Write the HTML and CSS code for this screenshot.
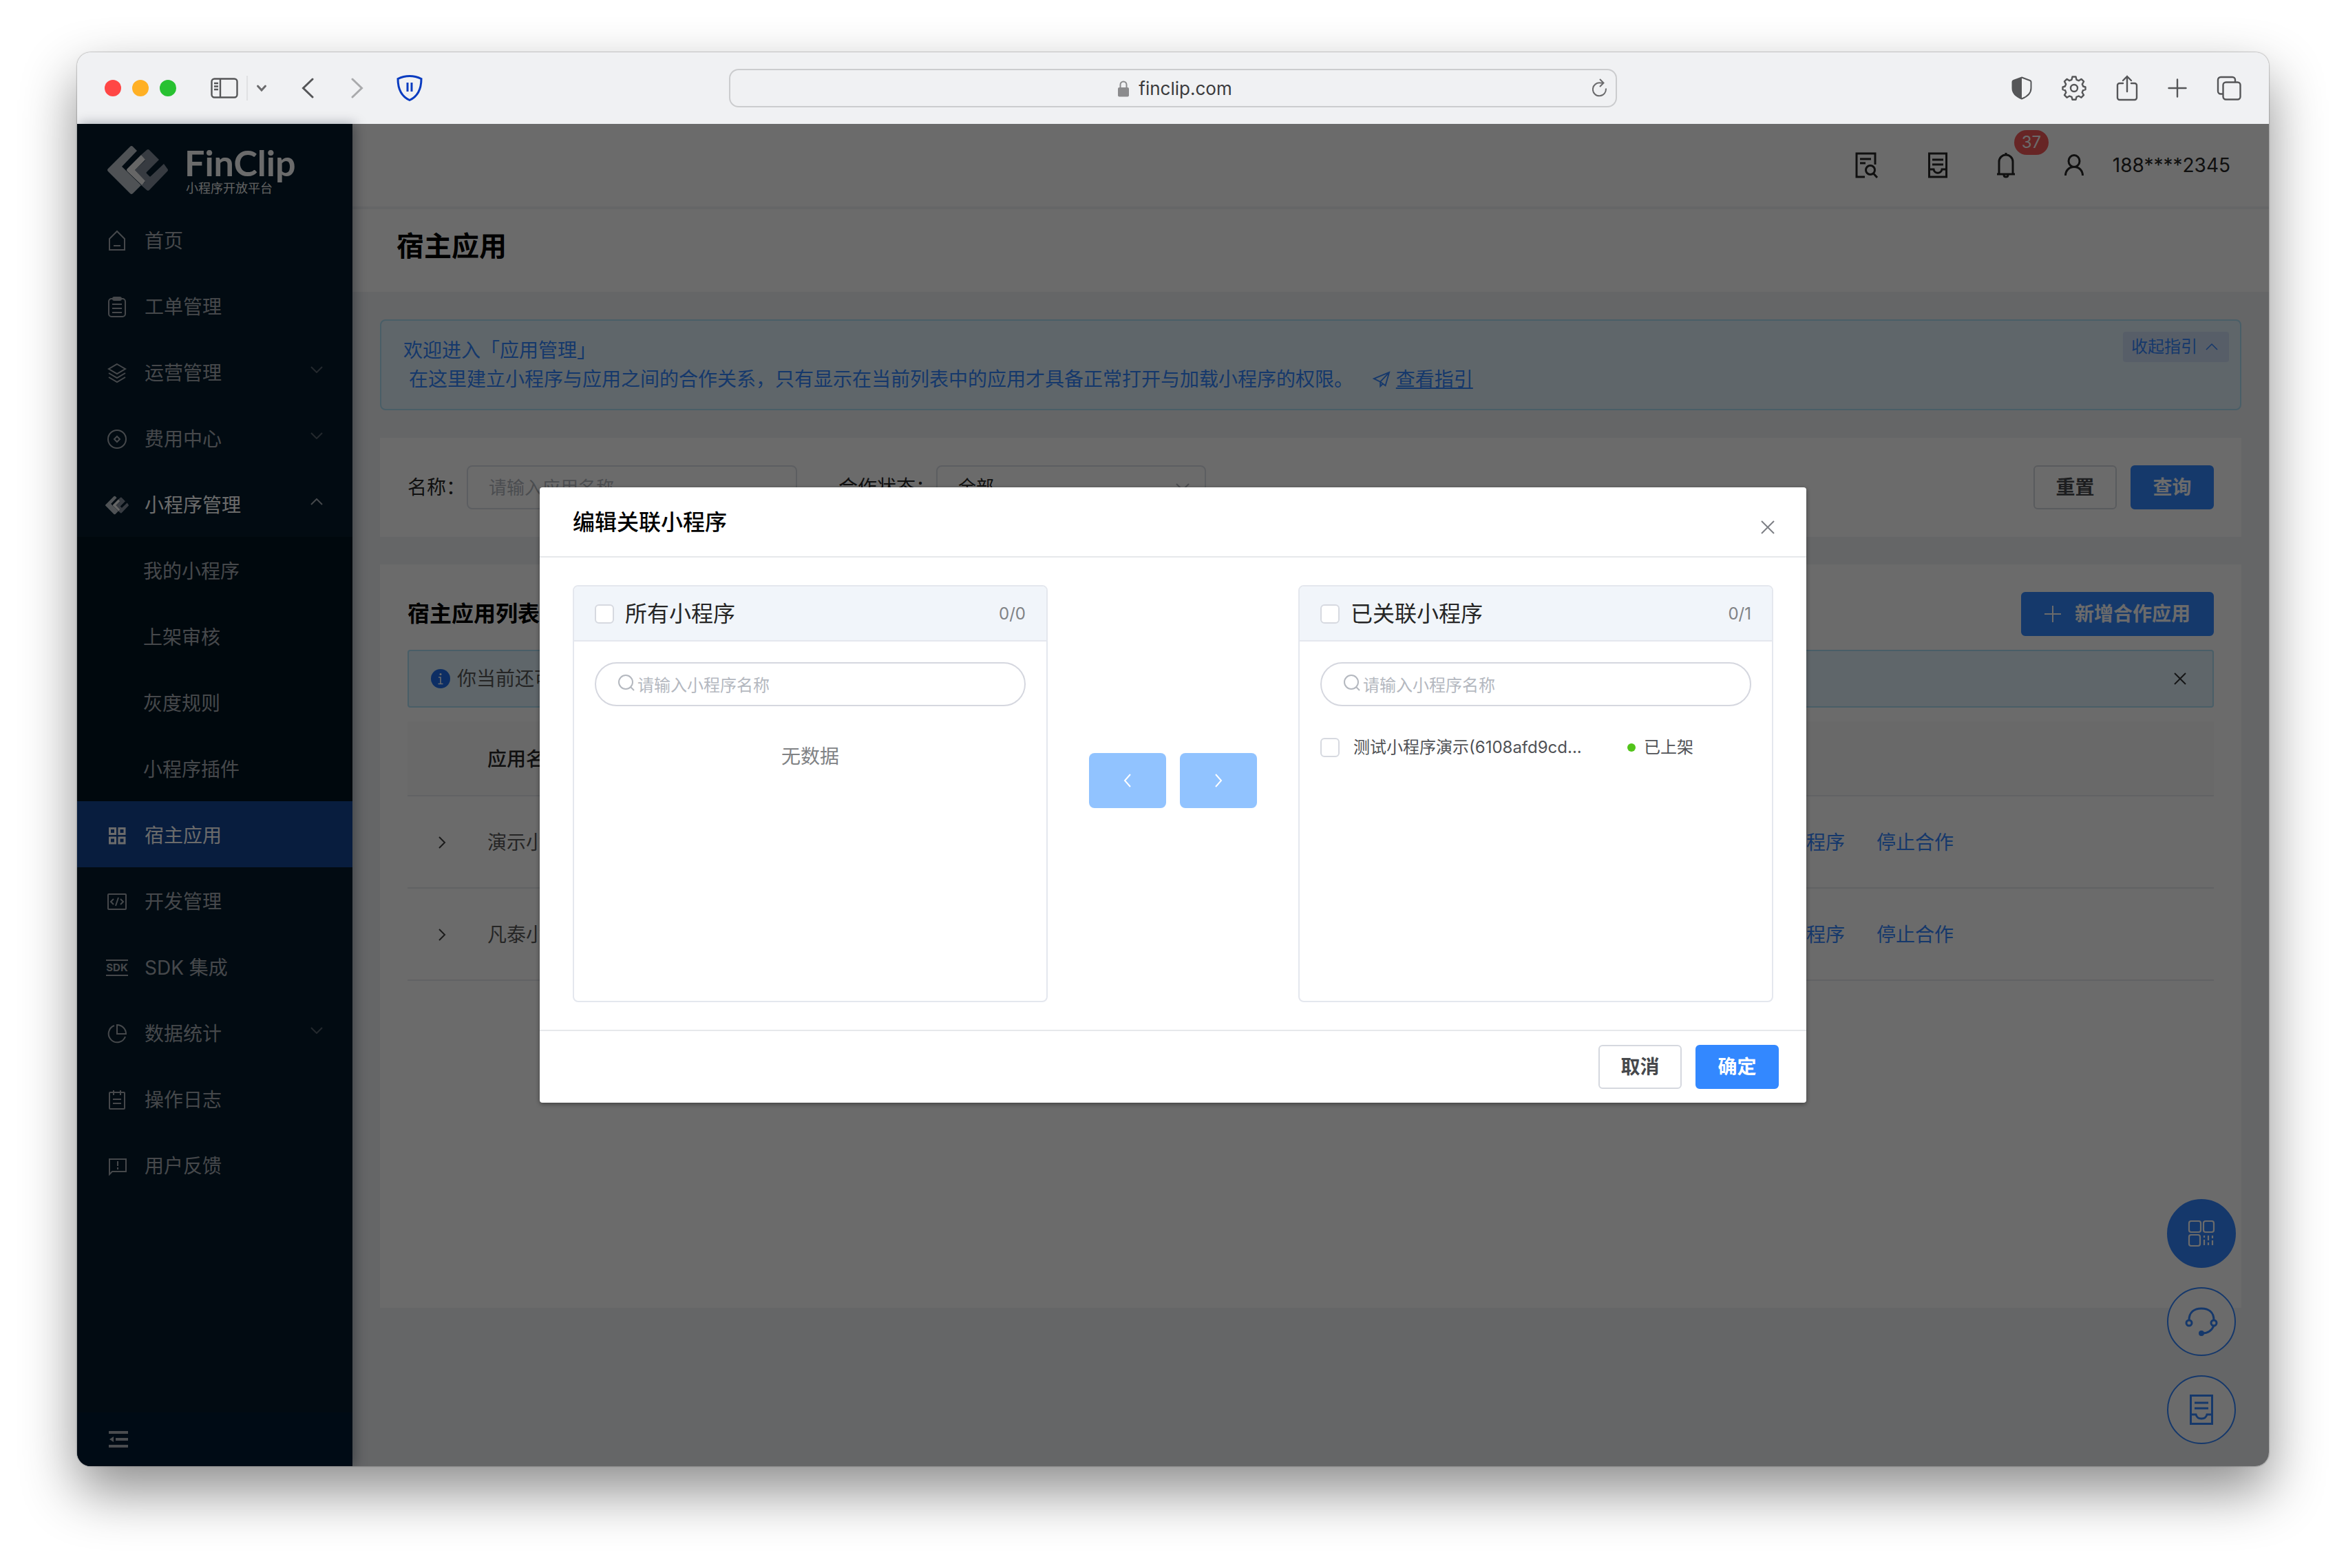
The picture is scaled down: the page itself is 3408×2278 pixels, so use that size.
FILE: index.html
```html
<!DOCTYPE html>
<html lang="zh-CN">
<head>
    <meta charset="UTF-8">
    <title>FinClip 小程序开放平台</title>
    <link rel="stylesheet" href="styles.css">
</head>
<body>
    <div class="window">
        <div class="toolbar">
            <div class="toolbar-left">
                <span class="light red"></span>
                <span class="light yellow"></span>
                <span class="light green"></span>
                <button class="tool sidebar-toggle" aria-label="边栏">
                    <svg width="40" height="30" viewBox="0 0 40 30" fill="none" stroke="currentColor" stroke-width="2.4"><rect x="1.5" y="1.5" width="37" height="27" rx="4"/><path d="M14 1.5v27M5 8h6M5 12.500h6M5 17h6"/></svg>
                </button>
                <button class="tool tab-groups" aria-label="标签页组">
                    <svg width="16" height="12" viewBox="0 0 16 12" fill="none" stroke="#6b6b6d" stroke-width="3" stroke-linecap="round"><path d="M2.500 3L8 9l5.500-6"/></svg>
                </button>
                <button class="tool back" aria-label="后退">
                    <svg width="18" height="30" viewBox="0 0 18 30" fill="none" stroke="currentColor" stroke-width="3" stroke-linecap="round"><path d="M16 2L2.500 15 16 28"/></svg>
                </button>
                <button class="tool forward" aria-label="前进">
                    <svg width="18" height="30" viewBox="0 0 18 30" fill="none" stroke="#a9aaac" stroke-width="3" stroke-linecap="round"><path d="M2 2l13.500 13L2 28"/></svg>
                </button>
                <button class="tool" aria-label="扩展">
                    <svg width="38" height="38" viewBox="0 0 38 38" fill="none" stroke="#0a3cc0" stroke-width="3"><path d="M19 1.500c6 0 12 1.500 17 4C36 21 31 31 19 36.500 7 31 2 21 2 5.500c5-2.500 11-4 17-4z"/><path d="M16 11v13M22 11v13"/></svg>
                </button>
            </div>
            <div class="address">
                <span class="site">
                    <svg width="16" height="24" viewBox="0 0 16 24"><path d="M3.500 11V6a4.500 4.500 0 019 0v5" fill="none" stroke="#8b8b8d" stroke-width="2"/><rect y="10" width="16" height="13.500" rx="2" fill="#8b8b8d"/></svg>
                    finclip.com
                </span>
                <button class="tool" aria-label="重新载入">
                    <svg width="22" height="28" viewBox="0 0 22 28" fill="none" stroke="#6b6b6d" stroke-width="2"><path d="M19.800 14.500A9.500 9.500 0 1112 6.500h4M11 1l5.500 5.500L11 12"/></svg>
                </button>
            </div>
            <div class="toolbar-right">
                <button class="tool" aria-label="隐私报告">
                    <svg width="30" height="34" viewBox="0 0 30 34"><path d="M15 1.500L27 6c1 .5 1.500 1 1.500 2v9c0 8-7 13-13.500 15.500C8.500 30 1.500 25 1.500 17V8c0-1 .5-1.500 1.500-2z" fill="none" stroke="currentColor" stroke-width="2"/><path d="M15 1.500L3 6c-1 .5-1.500 1-1.500 2v9c0 8 7 13 13.500 15.500z" fill="currentColor"/></svg>
                </button>
                <button class="tool" aria-label="设置">
                    <svg width="36" height="36" viewBox="0 0 36 36" fill="none" stroke="currentColor" stroke-width="2.400" stroke-linejoin="round"><path d="M15.500 1.500h5l1 4.300 3.200 1.400 3.900-2.300 3.500 3.500-2.300 3.900 1.400 3.200 3.300 1v3.500l-3.500 1.200-1.300 3.200 2.300 3.800-3.500 3.500-3.800-2.200-3.200 1.300-1 4h-5l-1-4-3.200-1.300-3.800 2.200L4 28.200l2.300-3.800L5 21.200 1.500 20v-3.500l3.300-1 1.400-3.200L4 8.400l3.500-3.500 3.800 2.300 3.200-1.400z"/><circle cx="18" cy="18" r="5"/></svg>
                </button>
                <button class="tool" aria-label="共享">
                    <svg width="32" height="38" viewBox="0 0 32 38" fill="none" stroke="currentColor" stroke-width="2.400" stroke-linecap="round"><path d="M10 12H5a3 3 0 00-3 3v18a3 3 0 003 3h22a3 3 0 003-3V15a3 3 0 00-3-3h-5M16 24V2M10 8l6-6 6 6"/></svg>
                </button>
                <button class="tool" aria-label="新标签页">
                    <svg width="28" height="28" viewBox="0 0 28 28" fill="none" stroke="currentColor" stroke-width="2.400" stroke-linecap="round"><path d="M14 1.500v25M1.500 14h25"/></svg>
                </button>
                <button class="tool" aria-label="标签页概览">
                    <svg width="36" height="36" viewBox="0 0 36 36" fill="none" stroke="currentColor" stroke-width="2.400"><rect x="9.500" y="9.500" width="25" height="25" rx="4"/><path d="M9.500 26.500H6a4 4 0 01-4-4V6a4 4 0 014-4h17a4 4 0 014 4v3.500"/></svg>
                </button>
            </div>
        </div>

        <div class="app">
            <aside class="sidebar">
                <div class="logo">
                    <svg class="logo-mark" viewBox="0 0 88 70"><use href="#mark"/></svg>
                    <div class="logo-text">
                        <span class="logo-name">FinClip</span>
                        <span class="logo-sub">小程序开放平台</span>
                    </div>
                </div>
                <nav>
                    <ul class="menu">
                        <li><a href="#">
                            <svg class="icon" viewBox="0 0 28 32"><path d="M3 13L14 2l11 11v16H3zM9 23h10"/></svg>首页</a></li>
                        <li><a href="#">
                            <svg class="icon" viewBox="0 0 28 32"><rect x="2" y="4" width="24" height="26" rx="4"/><rect x="8" y="2" width="12" height="4" rx="2"/><path d="M7 12h14M7 18h14M7 24h14"/></svg>工单管理</a></li>
                        <li><a href="#">
                            <svg class="icon" viewBox="0 0 28 32"><path d="M14 3l12 7-12 7-12-7zM2 16l12 7 12-7M2 22l12 7 12-7"/></svg>运营管理
                            <svg class="arrow" viewBox="0 0 18 10"><path d="M1 1l8 8 8-8"/></svg></a></li>
                        <li><a href="#">
                            <svg class="icon" viewBox="0 0 28 32"><circle cx="14" cy="16" r="13"/><path d="M14 12l4 4-4 4-4-4z"/></svg>费用中心
                            <svg class="arrow" viewBox="0 0 18 10"><path d="M1 1l8 8 8-8"/></svg></a></li>
                        <li>
                            <a href="#" class="open">
                                <svg class="icon icon-mark" viewBox="0 0 88 70"><use href="#mark"/></svg>小程序管理
                                <svg class="arrow" viewBox="0 0 18 10"><path d="M1 9l8-8 8 8"/></svg>
                            </a>
                            <ul class="submenu">
                                <li><a href="#">我的小程序</a></li>
                                <li><a href="#">上架审核</a></li>
                                <li><a href="#">灰度规则</a></li>
                                <li><a href="#">小程序插件</a></li>
                            </ul>
                        </li>
                        <li><a href="#" class="active">
                            <svg class="icon icon-bold" viewBox="0 0 28 32"><path d="M3.500 5.500h8v8h-8zM17 5.500h8v8h-8zM3.500 19h8v8h-8zM17 19h8v8h-8z"/></svg>宿主应用</a></li>
                        <li><a href="#">
                            <svg class="icon" viewBox="0 0 28 32"><rect x="1" y="5" width="26" height="22" rx="1"/><path d="M9 12l-4 4 4 4M19 12l4 4-4 4M16 10l-4 12"/></svg>开发管理</a></li>
                        <li><a href="#">
                            <svg class="icon icon-sdk" viewBox="0 0 32 32"><path d="M0 5h32M0 27h32"/><text x="16" y="21">SDK</text></svg>SDK 集成</a></li>
                        <li><a href="#">
                            <svg class="icon" viewBox="0 0 28 32"><path d="M10 4A12.500 12.500 0 1026 20M14 3v13h13A13 13 0 0014 3z"/></svg>数据统计
                            <svg class="arrow" viewBox="0 0 18 10"><path d="M1 1l8 8 8-8"/></svg></a></li>
                        <li><a href="#">
                            <svg class="icon" viewBox="0 0 28 32"><rect x="3" y="5" width="22" height="24" rx="1"/><path d="M9 2v7M19 2v7M8 15h12M8 21h12"/></svg>操作日志</a></li>
                        <li><a href="#">
                            <svg class="icon" viewBox="0 0 28 32"><path d="M3 28V6h24v18H7zM15 9v7M15 18v3"/></svg>用户反馈</a></li>
                    </ul>
                </nav>
                <button class="collapse" aria-label="收起菜单">
                    <svg width="28" height="24" viewBox="0 0 28 24" fill="none" stroke="currentColor" stroke-width="4"><path d="M0 2h28M10 12h18M0 22h28"/><path d="M7 8v8l-6-4z" fill="currentColor" stroke="none"/></svg>
                </button>
            </aside>

            <div class="main">
                <header class="header">
                    <a href="#" aria-label="文档搜索"><svg width="34" height="38" viewBox="0 0 34 38"><path d="M14 36H2V2h27v16M7 10h16M7 16h8"/><circle cx="22" cy="26" r="6.500"/><path d="M26.500 31l5.500 6"/></svg></a>
                    <a href="#" aria-label="消息"><svg width="28" height="38" viewBox="0 0 28 38"><path d="M1.500 2h25v34h-25zM6 11h16M6 18h16M1.500 25H8c1 7 11 7 12 0h6.500"/></svg></a>
                    <a href="#" class="bell" aria-label="通知"><svg width="26" height="38" viewBox="0 0 26 38"><path d="M3 32V14a10 10 0 0120 0v18M0 32h26M13 1v4M10 33c0 4 6 4 6 0"/></svg><span class="badge">37</span></a>
                    <a href="#" aria-label="用户"><svg width="28" height="38" viewBox="0 0 28 38"><ellipse cx="14" cy="13" rx="8" ry="8.500"/><path d="M1.500 34c0-7 5-12.500 12.500-12.500S26.500 27 26.500 34"/></svg></a>
                    <span class="account">188****2345</span>
                </header>
                <div class="page-title"><h1>宿主应用</h1></div>

                <div class="content">
                    <section class="guide">
                        <p>欢迎进入「应用管理」<br>
                            <span class="guide-text">在这里建立小程序与应用之间的合作关系，只有显示在当前列表中的应用才具备正常打开与加载小程序的权限。</span>
                            <svg class="plane" viewBox="0 0 28 28"><path d="M2 13L26 3l-6 21-8-6zM12 18L26 3M12 18v7l4-4"/></svg>
                            <a href="#">查看指引</a></p>
                        <button class="fold">收起指引
                            <svg width="18" height="10" viewBox="0 0 18 10" fill="none" stroke="currentColor" stroke-width="1.500"><path d="M1 9l8-8 8 8"/></svg>
                        </button>
                    </section>

                    <form class="card filter">
                        <label for="name">名称：</label>
                        <input id="name" type="text" placeholder="请输入应用名称">
                        <label for="status" class="status-label">合作状态：</label>
                        <div class="select">
                            <select id="status"><option>全部</option></select>
                            <svg width="20" height="12" viewBox="0 0 20 12"><path d="M1 1l9 9 9-9"/></svg>
                        </div>
                        <div class="filter-actions">
                            <button type="reset" class="btn">重置</button>
                            <button type="button" class="btn primary">查询</button>
                        </div>
                    </form>

                    <section class="card list">
                        <div class="list-head">
                            <h2>宿主应用列表</h2>
                            <button class="btn primary add">
                                <svg width="24" height="24" viewBox="0 0 24 24" fill="none" stroke="currentColor" stroke-width="2"><path d="M12 0v24M0 12h24"/></svg>
                                新增合作应用
                            </button>
                        </div>
                        <div class="notice">
                            <svg width="28" height="28" viewBox="0 0 28 28"><circle cx="14" cy="14" r="14" fill="#1f6fee"/><circle cx="14" cy="7.500" r="1.500" fill="#fff"/><path d="M11 12h3v9M10.500 21.500h7" fill="none" stroke="#fff" stroke-width="1.600"/></svg>
                            <span>你当前还可新增 8 个合作应用</span>
                            <button class="notice-close" aria-label="关闭">
                                <svg width="18" height="18" viewBox="0 0 18 18" fill="none" stroke="currentColor" stroke-width="2"><path d="M1 1l16 16M17 1L1 17"/></svg>
                            </button>
                        </div>
                        <table>
                            <thead>
                                <tr><th class="col-expand"></th><th>应用名称</th><th>合作状态</th><th class="col-action">操作</th></tr>
                            </thead>
                            <tbody>
                                <tr>
                                    <td class="col-expand"><svg width="12" height="20" viewBox="0 0 12 20"><path d="M2 2l8 8-8 8"/></svg></td>
                                    <td>演示小程序应用</td>
                                    <td>合作中</td>
                                    <td class="col-action"><a href="#">关联小程序</a><a href="#">停止合作</a></td>
                                </tr>
                                <tr>
                                    <td class="col-expand"><svg width="12" height="20" viewBox="0 0 12 20"><path d="M2 2l8 8-8 8"/></svg></td>
                                    <td>凡泰小程序应用</td>
                                    <td>合作中</td>
                                    <td class="col-action"><a href="#">关联小程序</a><a href="#">停止合作</a></td>
                                </tr>
                            </tbody>
                        </table>
                    </section>
                </div>
            </div>

            <div class="floating">
                <button class="float solid" aria-label="二维码">
                    <svg width="40" height="40" viewBox="0 0 40 40" fill="none" stroke="currentColor" stroke-width="2.200"><rect x="2" y="2" width="17" height="16" rx="3"/><rect x="23" y="2" width="15" height="16" rx="3"/><rect x="2" y="22" width="16" height="16" rx="3"/><path d="M24 23v3M24 29v8M30 23v7M30 33v4M36 23v4M36 30v7"/></svg>
                </button>
                <button class="float" aria-label="在线客服">
                    <svg width="48" height="44" viewBox="0 0 48 44" fill="none" stroke="currentColor" stroke-width="3"><path d="M6 20C6 8 14 3 24 3s18 5 18 17M42 28c-3 7-9 11-17 11"/><circle cx="6" cy="24" r="4"/><circle cx="42" cy="24" r="4"/><circle cx="24" cy="39" r="2.500" fill="currentColor"/></svg>
                </button>
                <button class="float" aria-label="工单">
                    <svg width="36" height="44" viewBox="0 0 36 44" fill="none" stroke="currentColor" stroke-width="3"><path d="M2.500 1.500h31v41h-31zM8 12h20M8 20h20M2.500 29H10c2 8 14 8 16 0h7.500"/></svg>
                </button>
            </div>

            <div class="mask">
                <div class="modal" role="dialog" aria-labelledby="modal-title">
                    <div class="modal-head">
                        <h2 id="modal-title">编辑关联小程序</h2>
                        <button class="modal-close" aria-label="关闭">
                            <svg width="20" height="20" viewBox="0 0 20 20" fill="none" stroke="currentColor" stroke-width="2"><path d="M1 1l18 18M19 1L1 19"/></svg>
                        </button>
                    </div>
                    <div class="modal-body">
                        <div class="panel">
                            <div class="panel-head">
                                <input type="checkbox" id="all">
                                <label for="all">所有小程序</label>
                                <span class="count">0/0</span>
                            </div>
                            <div class="panel-body">
                                <div class="search">
                                    <svg width="24" height="24" viewBox="0 0 24 24"><circle cx="11" cy="11" r="10"/><path d="M18 18l5 5"/></svg>
                                    <input type="text" placeholder="请输入小程序名称" aria-label="搜索所有小程序">
                                </div>
                                <p class="empty">无数据</p>
                            </div>
                        </div>
                        <div class="transfer">
                            <button disabled aria-label="移到左侧"><svg width="12" height="20" viewBox="0 0 12 20"><path d="M10 1L2 10l8 9"/></svg></button>
                            <button disabled aria-label="移到右侧"><svg width="12" height="20" viewBox="0 0 12 20"><path d="M2 1l8 9-8 9"/></svg></button>
                        </div>
                        <div class="panel">
                            <div class="panel-head">
                                <input type="checkbox" id="linked">
                                <label for="linked">已关联小程序</label>
                                <span class="count">0/1</span>
                            </div>
                            <div class="panel-body">
                                <div class="search">
                                    <svg width="24" height="24" viewBox="0 0 24 24"><circle cx="11" cy="11" r="10"/><path d="M18 18l5 5"/></svg>
                                    <input type="text" placeholder="请输入小程序名称" aria-label="搜索已关联小程序">
                                </div>
                                <div class="item">
                                    <input type="checkbox" id="item1">
                                    <label for="item1">测试小程序演示(6108afd9cd...</label>
                                    <span class="state">已上架</span>
                                </div>
                            </div>
                        </div>
                    </div>
                    <div class="modal-foot">
                        <button class="btn">取消</button>
                        <button class="btn primary">确定</button>
                    </div>
                </div>
            </div>
        </div>
    </div>

    <svg class="defs" width="0" height="0">
        <symbol id="mark" viewBox="0 0 88 70">
            <g stroke="none">
                <path d="M33 1q2-2 4 0l6 6-22 23 28 27-12 12q-2 2-4 0L1 37q-2-2 0-4z" fill="#bcc4cb"/>
                <path d="M49 13l8-7q2-2 4 0l14 14-18 18q-1 1 0 2l4 4q1 1 2 0l19-18 5 7q2 2 0 4L61 64q-2 2-4 0l-8-7 6-5-15-17 15-14z" fill="#838d9b"/>
                <path d="M49 13l6 7-15 15 15 16-5 6-21-20q-2-2 0-4z" fill="#f2f2f2"/>
            </g>
        </symbol>
    </svg>
</body>
</html>
```
FILE: styles.css
```css
* {
    box-sizing: border-box;
}

body {
    margin: 0;
    min-height: 100vh;
    padding: 76px 112px 148px;
    display: flex;
    background: #fff;
    color: #262626;
    font-family: Inter, "Noto Sans CJK SC", sans-serif;
    font-size: 28px;
    line-height: 42px;
}

h1, h2, p, ul {
    margin: 0;
    padding: 0;
}

ul {
    list-style: none;
}

a {
    color: #3385ff;
    text-decoration: none;
}

button, input, select {
    font: inherit;
    color: inherit;
}

button {
    border: none;
    padding: 0;
    background: none;
    cursor: pointer;
}

svg {
    display: block;
    flex: none;
}

.defs {
    position: absolute;
}

/* browser window */
.window {
    flex: 1;
    min-width: 0;
    display: flex;
    flex-direction: column;
    border-radius: 20px;
    overflow: hidden;
    box-shadow: 0 0 2px rgba(0, 0, 0, 0.6), 0 36px 80px rgba(0, 0, 0, 0.45);
}

.toolbar {
    height: 104px;
    padding: 0 40px;
    display: grid;
    grid-template-columns: 1fr 1290px 1fr;
    align-items: center;
    background: #f0f1f3;
    color: #555658;
}

.toolbar-left, .toolbar-right {
    display: flex;
    align-items: center;
}

.toolbar-right {
    justify-content: flex-end;
    gap: 43px;
}

.light {
    width: 24px;
    height: 24px;
    margin-right: 16px;
    border-radius: 50%;
}

.red {
    background: #ff4645;
}

.yellow {
    background: #ffb024;
}

.green {
    background: #28c131;
}

.sidebar-toggle {
    margin-left: 34px;
}

.tab-groups {
    height: 36px;
    margin-left: 12px;
    padding-left: 12px;
    border-left: 2px solid #e0e1e3;
}

.back {
    margin-left: 50px;
}

.forward {
    margin: 0 48px 0 54px;
}

.address {
    height: 56px;
    padding: 0 12px;
    display: flex;
    align-items: center;
    border: 2px solid #cbccce;
    border-radius: 14px;
}

.site {
    flex: 1;
    display: flex;
    align-items: center;
    justify-content: center;
    gap: 14px;
    padding: 2px 0 0 28px;
    color: #3a3a3c;
    font-size: 26px;
}

/* page */
.app {
    position: relative;
    flex: 1;
    display: flex;
}

.sidebar {
    z-index: 1;
    width: 400px;
    display: flex;
    flex-direction: column;
    background: #051c2d;
    color: #a6adb4;
    box-shadow: 4px 0 16px rgba(0, 21, 41, 0.35);
}

.logo {
    height: 120px;
    padding: 14px 0 0 44px;
    display: flex;
    align-items: center;
    gap: 24px;
}

.logo-mark {
    width: 88px;
    height: 70px;
}

.logo-text {
    display: flex;
    flex-direction: column;
    padding-top: 4px;
}

.logo-name {
    color: #fff;
    font-family: Lato, sans-serif;
    font-size: 52px;
    font-weight: bold;
    line-height: 48px;
}

.logo-sub {
    margin-top: 2px;
    padding-left: 2px;
    color: #e6e6e6;
    font-size: 18px;
    line-height: 24px;
}

.menu a {
    height: 96px;
    padding: 4px 44px 0;
    display: flex;
    align-items: center;
    color: #a6adb4;
}

.menu .open, .menu .active {
    color: #fff;
}

.menu .active {
    background: #134594;
}

.icon {
    width: 28px;
    height: 32px;
    margin-right: 26px;
    fill: none;
    stroke: currentColor;
    stroke-width: 2;
}

.icon-bold {
    stroke-width: 3;
}

.icon-mark {
    width: 34px;
    margin: 0 23px 0 -3px;
}

.icon-sdk {
    width: 32px;
    margin: 0 24px 0 -2px;
}

.icon-sdk text {
    fill: currentColor;
    stroke: none;
    font-size: 15px;
    font-weight: bold;
    text-anchor: middle;
}

.arrow {
    width: 18px;
    height: 10px;
    margin: 0 -1px 10px auto;
    fill: none;
    stroke: #56616c;
    stroke-width: 2;
}

.open .arrow {
    stroke: #a6adb4;
}

.submenu {
    background: #001420;
}

.submenu a {
    padding-left: 96px;
}

.collapse {
    margin-top: auto;
    height: 78px;
    padding-left: 46px;
    background: #021c33;
    color: #b0b6bc;
}

.main {
    flex: 1;
    min-width: 0;
    background: #f0f2f5;
}

.header {
    height: 120px;
    padding: 0 56px 0 0;
    display: flex;
    align-items: center;
    justify-content: flex-end;
    gap: 72px;
    background: #fff;
}

.header svg {
    fill: none;
    stroke: #262626;
    stroke-width: 3;
}

.bell {
    position: relative;
}

.badge {
    position: absolute;
    left: 25px;
    top: -32px;
    height: 36px;
    padding: 0 11px;
    border-radius: 18px;
    background: #f5585a;
    color: #fff;
    font-size: 24px;
    line-height: 36px;
}

.account {
    margin-left: -30px;
}

.page-title {
    padding: 24px 64px 36px;
    border-top: 4px solid #f0f2f5;
    background: #fff;
}

.page-title h1 {
    color: #000;
    font-size: 40px;
    line-height: 60px;
    font-weight: bold;
}

.content {
    padding: 40px;
    display: flex;
    flex-direction: column;
    gap: 40px;
}

.guide {
    padding: 16px 16px 16px 32px;
    display: flex;
    justify-content: space-between;
    align-items: flex-start;
    border: 2px solid #aedff5;
    border-radius: 8px;
    background: #e2f4fd;
    color: #3385ff;
}

.guide p {
    padding: 6px 0;
}

.guide-text {
    margin: 0 20px 0 8px;
}

.guide a {
    text-decoration: underline;
}

.plane {
    display: inline-block;
    width: 26px;
    height: 26px;
    vertical-align: -3px;
    fill: none;
    stroke: currentColor;
    stroke-width: 2;
}

.fold {
    height: 44px;
    padding: 0 16px 0 12px;
    display: flex;
    align-items: center;
    gap: 12px;
    border-radius: 4px;
    background: #cfe0f7;
    font-size: 24px;
}

.card {
    padding: 40px;
    background: #fff;
}

.filter {
    display: flex;
    align-items: center;
}

.filter input, .filter select {
    height: 64px;
    padding: 0 30px;
    border: 2px solid #dcdfe6;
    border-radius: 8px;
    background: #fff;
    font-size: 26px;
}

.filter input {
    width: 480px;
    margin-left: 2px;
}

.select {
    position: relative;
    margin-left: 2px;
}

.filter select {
    display: block;
    width: 392px;
    appearance: none;
}

.select svg {
    position: absolute;
    right: 24px;
    top: 26px;
    fill: none;
    stroke: #b4b8bf;
    stroke-width: 2;
}

.status-label {
    margin-left: 60px;
}

::placeholder {
    color: #b4b8bf;
    opacity: 1;
}

.filter-actions {
    margin-left: auto;
    display: flex;
    gap: 20px;
}

.btn {
    min-width: 121px;
    height: 64px;
    padding: 0 30px;
    border: 2px solid #d5d8df;
    border-radius: 6px;
    background: #fff;
    color: #46484c;
    font-weight: 600;
}

.btn.primary {
    border-color: #3388ff;
    background: #3388ff;
    color: #fff;
}

.list {
    min-height: 1080px;
}

.list-head {
    display: flex;
    align-items: center;
    justify-content: space-between;
    margin-bottom: 20px;
}

.list-head h2 {
    color: #000;
    font-size: 32px;
    font-weight: bold;
}

.btn.add {
    padding: 0 32px;
    display: flex;
    align-items: center;
    gap: 20px;
}

.notice {
    height: 84px;
    padding: 0 38px 0 32px;
    display: flex;
    align-items: center;
    gap: 10px;
    border: 2px solid #aedff5;
    border-radius: 4px;
    background: #e2f4fd;
    color: #595959;
}

.notice-close {
    margin-left: auto;
    color: #333;
}

table {
    width: 100%;
    margin-top: 20px;
    border-collapse: collapse;
    table-layout: fixed;
}

th, td {
    height: 134px;
    padding: 2px 0 0;
    border-bottom: 2px solid #e8eaee;
    text-align: left;
    color: #595959;
}

th {
    height: 108px;
    background: #fafafa;
    color: #262626;
    font-weight: 500;
}

.col-expand {
    width: 116px;
}

.col-expand svg {
    margin-left: 44px;
    fill: none;
    stroke: #404040;
    stroke-width: 2;
}

.col-action {
    width: 676px;
}

.col-action a {
    margin-right: 46px;
}

.floating {
    position: absolute;
    right: 48px;
    bottom: 32px;
    display: flex;
    flex-direction: column;
    gap: 28px;
}

.float {
    width: 100px;
    height: 100px;
    display: flex;
    align-items: center;
    justify-content: center;
    border: 2px solid #3385ff;
    border-radius: 50%;
    background: #fff;
    color: #3385ff;
}

.float.solid {
    background: #3385ff;
    color: #fff;
}

/* dialog */
.mask {
    position: absolute;
    inset: 0;
    z-index: 2;
    display: flex;
    align-items: center;
    justify-content: center;
    background: rgba(0, 0, 0, 0.58);
}

.modal {
    width: 1840px;
    border-radius: 4px;
    background: #fff;
    box-shadow: 0 2px 6px rgba(0, 0, 0, 0.4);
}

.modal-head {
    height: 102px;
    padding: 2px 46px 0 48px;
    display: flex;
    align-items: center;
    justify-content: space-between;
    border-bottom: 2px solid #e6e8eb;
}

.modal-head h2 {
    color: #000;
    font-size: 32px;
    font-weight: 500;
}

.modal-close {
    padding-top: 14px;
    color: #7d7f85;
}

.modal-body {
    padding: 40px 48px;
    display: flex;
    gap: 60px;
}

.panel {
    flex: 1;
    height: 606px;
    border: 2px solid #e4e7ee;
    border-radius: 8px;
    overflow: hidden;
}

.panel-head {
    height: 80px;
    padding: 2px 30px 0;
    display: flex;
    align-items: center;
    gap: 16px;
    border-bottom: 2px solid #e4e7ee;
    background: #f1f5fa;
    font-size: 32px;
}

input[type="checkbox"] {
    appearance: none;
    flex: none;
    width: 28px;
    height: 28px;
    margin: 0;
    border: 2px solid #d6d9e0;
    border-radius: 6px;
    background: #fff;
}

.count {
    margin-left: auto;
    color: #808285;
    font-size: 24px;
}

.panel-body {
    padding: 30px;
}

.search {
    height: 64px;
    padding: 0 32px;
    display: flex;
    align-items: center;
    gap: 4px;
    border: 2px solid #d5d7df;
    border-radius: 32px;
    font-size: 24px;
}

.search svg {
    margin-bottom: 4px;
    fill: none;
    stroke: #b4b8bf;
    stroke-width: 2;
}

.search input {
    flex: 1;
    padding: 4px 0 0;
    border: none;
    outline: none;
    background: none;
}

.empty {
    margin-top: 52px;
    text-align: center;
    color: #808285;
}

.transfer {
    display: flex;
    align-items: center;
    gap: 20px;
    padding-bottom: 38px;
}

.transfer button {
    width: 112px;
    height: 80px;
    display: flex;
    align-items: center;
    justify-content: center;
    border-radius: 8px;
    background: #91c3ff;
}

.transfer svg {
    fill: none;
    stroke: #fff;
    stroke-width: 2;
}

.item {
    margin-top: 39px;
    display: flex;
    align-items: center;
    color: #505256;
    font-size: 24px;
}

.item label {
    width: 418px;
    padding-left: 20px;
}

.state {
    display: flex;
    align-items: center;
    gap: 12px;
}

.state::before {
    content: "";
    width: 12px;
    height: 12px;
    border-radius: 50%;
    background: #52c41a;
}

.modal-foot {
    padding: 20px 40px;
    display: flex;
    justify-content: flex-end;
    gap: 20px;
    border-top: 2px solid #e6e8eb;
}
```
